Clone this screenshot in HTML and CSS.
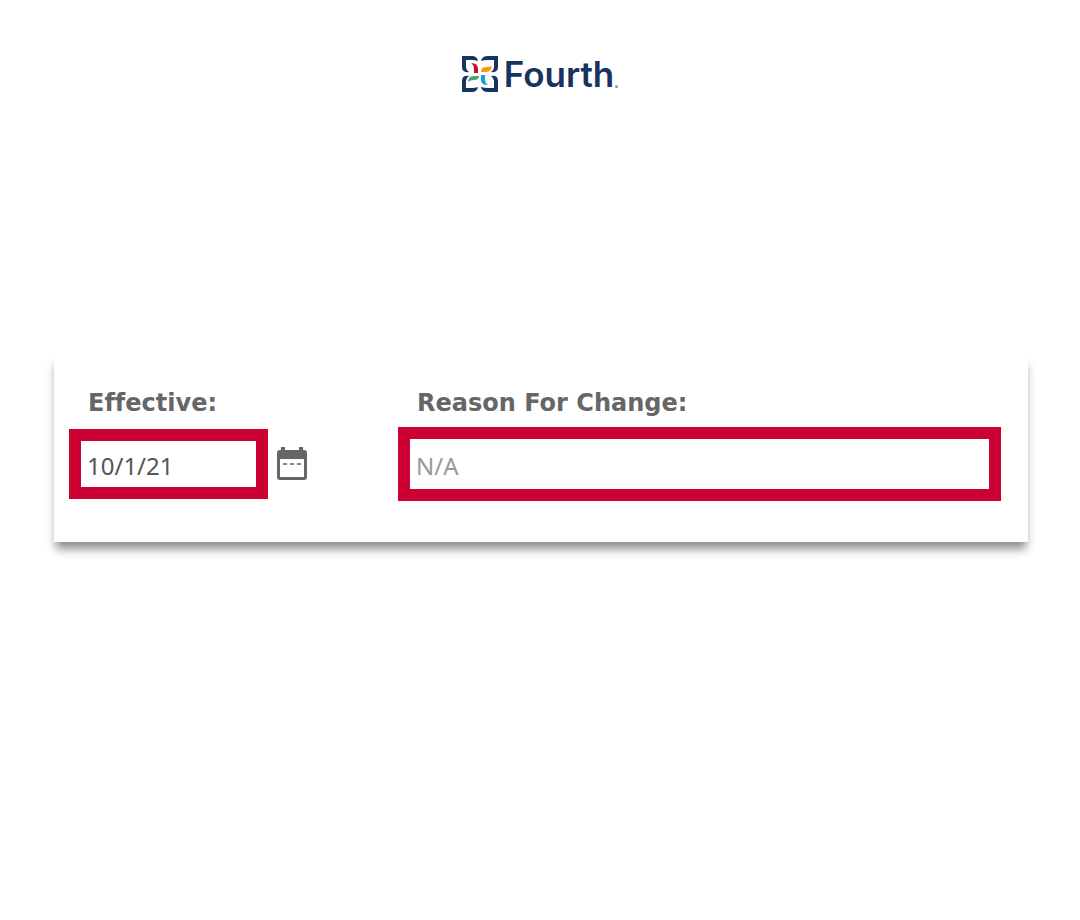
FILE: index.html
```html
<!DOCTYPE html>
<html lang="en">
<head>
  <meta charset="UTF-8">
  <meta name="viewport" content="width=device-width, initial-scale=1.0">
  <title>Fourth</title>
  <link rel="stylesheet" href="styles.css">
</head>
<body>
  <header class="header">
    <div class="logo">
      <svg class="logo-mark" viewBox="0 0 36 36" aria-hidden="true">
        <!-- Corner leaves -->
        <g fill="#19335f">
          <path d="M0 0H10Q15 0 16 5Q13 4 10 4H4V11Q4 14 7 16Q0 17 0 11Z"/>
          <path d="M36 0H26Q20 0 19 5Q22 4 26 4H32V11Q32 14 29 16Q36 17 36 11Z"/>
          <path d="M0 36H10Q15 36 16 31Q13 32 10 32H4V25Q4 22 7 20Q0 19 0 25Z"/>
          <path d="M36 36H26Q20 36 19 31Q22 32 26 32H32V25Q32 22 29 20Q36 19 36 25Z"/>
        </g>
        <!-- Petals -->
        <path fill="#ce0635" d="M9 7Q16 7 16 13V17H12V13Q12 9 9 7Z"/>
        <path fill="#fb9b0c" d="M30 10Q29 16 24 16H19Q19 11 24 11Q28 11 30 10Z"/>
        <path fill="#0aa3d8" d="M26 29Q19 29 19 24V19H23V24Q23 27 26 29Z"/>
        <path fill="#48a56a" d="M6 26Q6 20 12 20H17Q17 24 12 24Q8 24 6 26Z"/>
      </svg>
      <span class="logo-name">Fourth</span><span class="logo-dot"></span>
    </div>
  </header>

  <main class="card">
    <form class="form">
      <div class="field">
        <label for="effective">Effective:</label>
        <div class="field-row">
          <input type="text" id="effective" class="date-input" value="10/1/21">
          <button type="button" class="calendar-btn" aria-label="Choose date">
            <svg viewBox="0 0 30 34" aria-hidden="true">
              <path fill="#666" d="M4 0h4v3h14V0h4v3h1q3 0 3 3v24q0 3-3 3H3q-3 0-3-3V6q0-3 3-3h1zM3 12v18h24V12z"/>
              <path fill="#888" d="M6 16h4v2H6zM13 16h4v2h-4zM20 16h4v2h-4z"/>
            </svg>
          </button>
        </div>
      </div>
      <div class="field field-wide">
        <label for="reason">Reason For Change:</label>
        <div class="field-row">
          <input type="text" id="reason" class="reason-input" placeholder="N/A">
        </div>
      </div>
    </form>
  </main>
</body>
</html>
```
FILE: styles.css
```css
* {
  box-sizing: border-box;
}
body {
  font-family: "Noto Sans", sans-serif;
  background-color: white;
  min-height: 100vh;
  margin: 0;
}
.header {
  display: flex;
  justify-content: center;
  padding: 52px 0 258px;
}
.logo {
  display: flex;
  align-items: center;
  height: 44px;
  color: #19335f;
}
.logo-mark {
  width: 36px;
  height: 36px;
  margin-right: 6px;
}
.logo-name {
  font-family: Inter, sans-serif;
  font-size: 35px;
  font-weight: 600;
  line-height: 44px;
}
.logo-dot {
  align-self: flex-end;
  width: 3px;
  height: 3px;
  margin: 0 0 8px 1px;
  border-radius: 50%;
  background: #8a97ad;
}
.card {
  margin: 0 52px 0 54px;
  padding: 33px 27px 41px 15px;
  background: white;
  box-shadow: 0 9px 9px -2px rgba(0, 0, 0, 0.45);
}
.form {
  display: flex;
  gap: 91px;
}
.field {
  display: flex;
  flex-direction: column;
  gap: 8px;
}
.field-wide {
  flex: 1;
}
label {
  padding-left: 19px;
  font-family: "DejaVu Sans", Verdana, sans-serif;
  font-size: 24px;
  font-weight: bold;
  font-variant-ligatures: none;
  line-height: 32px;
  color: #666;
}
.field-row {
  display: flex;
  align-items: center;
  gap: 9px;
  height: 74px;
}
input {
  min-width: 0;
  border: 12px solid #cc0033;
  padding: 2px 6px 0;
  background: white;
  font-family: inherit;
  font-size: 24px;
  color: #555;
}
input::placeholder {
  color: #999;
  opacity: 1;
}
.date-input {
  width: 199px;
  height: 70px;
}
.reason-input {
  width: 100%;
  height: 74px;
}
.calendar-btn {
  width: 30px;
  height: 34px;
  padding: 0;
  border: none;
  background: none;
  cursor: pointer;
}
.calendar-btn svg {
  display: block;
  width: 30px;
  height: 34px;
}
```
